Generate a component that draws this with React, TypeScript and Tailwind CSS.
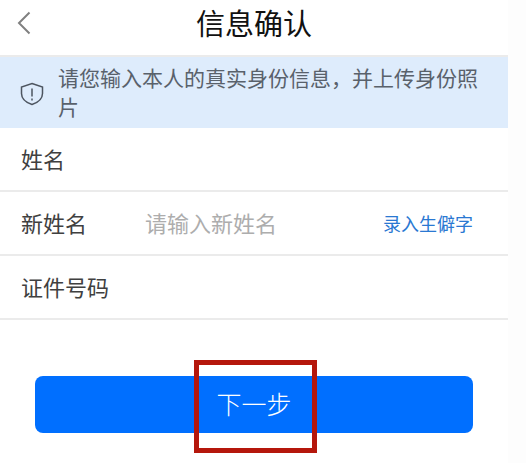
const CJK = "font-['Roboto','Noto_Sans_CJK_SC',sans-serif]";

function Row({ label, children }: { label: string; children?: React.ReactNode }) {
  return (
    <div className="flex h-[64px] items-center border-b-2 border-[#ebebeb] pl-[21px] pr-[35px] pt-[3px] text-[22px] text-[#404040]">
      <span className="w-[124px] shrink-0 whitespace-nowrap">{label}</span>
      {children}
    </div>
  );
}

export default function App() {
  return (
    <div className={`${CJK} h-[463px] w-[526px] overflow-hidden bg-[#fdfdfd]`}>
      <div className="h-full w-[508px] bg-white">
        <header className="relative flex h-[57px] items-center justify-center border-b-2 border-[#ebebeb] pb-[4px]">
          <svg className="absolute left-[17px] top-[11px]" width="14" height="24" viewBox="0 0 14 24" fill="none" stroke="#808080" strokeWidth="2">
            <path d="M12.500 1.500 2 12l10.500 10.500" />
          </svg>
          <h1 className="text-[29px] font-normal text-[#111111]">信息确认</h1>
        </header>

        <div className="flex h-[71px] items-center bg-[#deecfc] pl-[20px] pr-[20px] pt-[3px] text-[21px] leading-[29px] text-[#59616b]">
          <svg className="mr-[14px] shrink-0" width="24" height="24" viewBox="0 0 24 24" fill="none" stroke="#4d5560" strokeWidth="1.500">
            <path d="M12 1.500 22.500 5v6.500c0 5.500-4.500 9-10.500 11-6-2-10.500-5.500-10.500-11V5Z" />
            <path d="M12 6.500v8M12 16.500v2" />
          </svg>
          <p>请您输入本人的真实身份信息，并上传身份照片</p>
        </div>

        <Row label="姓名" />
        <Row label="新姓名">
          <span className="flex-1 whitespace-nowrap text-[#adadad]">请输入新姓名</span>
          <span className="whitespace-nowrap text-[18px] text-[#2a78d2]">录入生僻字</span>
        </Row>
        <Row label="证件号码" />

        <div className="relative mx-[35px] mt-[56px] flex h-[57px] items-center justify-center rounded-[8px] bg-[#006fff] pt-[2px] text-[25px] font-light text-white">
          下一步
          <div className="absolute left-[159px] top-[-16px] h-[93px] w-[123px] border-[5px] border-[#b5170c]" />
        </div>
      </div>
    </div>
  );
}
